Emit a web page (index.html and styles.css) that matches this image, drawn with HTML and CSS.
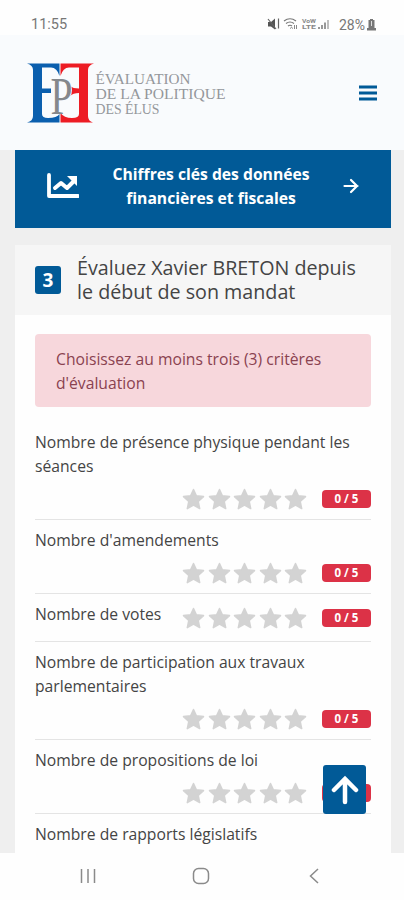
FILE: index.html
```html
<!DOCTYPE html>
<html lang="fr">
<head>
  <meta charset="UTF-8" />
  <meta name="viewport" content="width=device-width, initial-scale=1.0"/>
  <title>Évaluation de la politique des élus</title>
  <link rel="stylesheet" href="styles.css">
</head>
<body>
  <svg width="0" height="0" class="sprite">
    <symbol id="star" viewBox="0 0 24 24">
      <path d="M11.500 2.500l2.900 6.300 7.100.8-5.300 4.900 1.500 7.100-6.200-3.500-6.200 3.500 1.500-7.100L1.500 9.600l7.100-.8z" fill="#d3d3d3" stroke="#d3d3d3" stroke-width="1.500" stroke-linejoin="round"/>
    </symbol>
  </svg>
  <div class="phone">
    <div class="status">
      <span class="time">11:55</span>
      <div class="status-right">
        <svg class="status-icons" viewBox="0 0 66 14">
          <path d="M1 5h3l4-3.500v11L4 9.500H1z" fill="#555"/>
          <path d="M1 2l8 10M11.500 1.500v10" stroke="#666" stroke-width="1.200" fill="none"/>
          <path d="M17 4q6-4.500 12 0M19 6.500q4-3 8 0M21 9q2-1.500 4 0" stroke="#777" stroke-width="1.200" fill="none"/>
          <path d="M23 11.500l1.500-1 1.500 1M27.500 8v4M29.500 8v4" stroke="#888" fill="none"/>
          <text x="35" y="6" class="tiny" textLength="14" lengthAdjust="spacingAndGlyphs">VoW</text>
          <text x="35" y="12" class="tiny" textLength="14" lengthAdjust="spacingAndGlyphs">LTE</text>
          <path d="M52 12v-2M55 12V8M58 12V5.500" stroke="#777" stroke-width="1.500"/>
          <path d="M61 12V3" stroke="#aaa" stroke-width="1.500"/>
        </svg>
        <span class="percent">28%</span>
        <svg class="battery" viewBox="0 0 9 13">
          <path d="M3 1h3v1h1.500v8H9v2.500H0V10h1.500V2H3z" fill="#777"/>
          <path d="M4.500 3v5" stroke="#ddd" stroke-width="1"/>
        </svg>
      </div>
    </div>

    <header class="header">
      <svg class="logo" viewBox="0 0 204 66">
        <path d="M1 3.500H33.500V16Q31 7.500 25 7.500H16V28.500H25V33H16V54Q16 58 22 58Q31 58 33.500 54V62.500H1Q7 61 7 56V10Q7 5 1 3.500z" fill="#0b5fae"/>
        <path d="M68 3.500H34.500V16Q37 7.500 43 7.500H53V28.500Q47 28.500 44 26V36Q47 33 53 33V54Q53 58 46 58Q38 58 34.500 53V62.500H67Q62 61 62 56V10Q62 5 68 3.500z" fill="#ed1c24"/>
        <path d="M27 19h11q8 2 8 11t-8 10l-4 1v13h-8z" fill="#f9fbfd"/>
        <text x="24.500" y="54" class="logo-p" textLength="22" lengthAdjust="spacingAndGlyphs">P</text>
        <text x="69.500" y="23.500" class="logo-text" textLength="95" lengthAdjust="spacingAndGlyphs">ÉVALUATION</text>
        <text x="69.500" y="38.500" class="logo-text" textLength="130" lengthAdjust="spacingAndGlyphs">DE LA POLITIQUE</text>
        <text x="69.500" y="53.500" class="logo-text" textLength="64" lengthAdjust="spacingAndGlyphs">DES ÉLUS</text>
      </svg>
      <svg class="menu" viewBox="0 0 18 16">
        <path d="M0 2h18M0 8h18M0 14h18" stroke="#015a97" stroke-width="2.800"/>
      </svg>
    </header>

    <main class="content">
      <a href="#" class="banner">
        <svg class="chart" viewBox="0 0 32 26">
          <path d="M2 2v21h29" fill="none" stroke="#fff" stroke-width="3.800" stroke-linecap="round" stroke-linejoin="round"/>
          <path d="M8 15l6-5 6 5 7-7" fill="none" stroke="#fff" stroke-width="4" stroke-linecap="round" stroke-linejoin="round"/>
          <path d="M20 3h10v10z" fill="#fff"/>
        </svg>
        <span class="banner-text">Chiffres clés des données<br>financières et fiscales</span>
        <svg class="arrow" viewBox="0 0 16 16">
          <path d="M1.500 8h13M8 2l6 6-6 6" fill="none" stroke="#fff" stroke-width="2.200" stroke-linecap="round"/>
        </svg>
      </a>

      <section class="card">
        <div class="card-header">
          <span class="step">3</span>
          <h2>Évaluez Xavier BRETON depuis<br>le début de son mandat</h2>
        </div>
        <div class="card-body">
          <div class="alert">Choisissez au moins trois (3) critères<br>d'évaluation</div>
          <div class="row">
            <div class="label">Nombre de présence physique pendant les<br>séances</div>
            <div class="rating">
              <div class="stars"><svg><use href="#star"/></svg><svg><use href="#star"/></svg><svg><use href="#star"/></svg><svg><use href="#star"/></svg><svg><use href="#star"/></svg></div>
              <span class="badge">0 / 5</span>
            </div>
          </div>
          <div class="row">
            <div class="label">Nombre d'amendements</div>
            <div class="rating">
              <div class="stars"><svg><use href="#star"/></svg><svg><use href="#star"/></svg><svg><use href="#star"/></svg><svg><use href="#star"/></svg><svg><use href="#star"/></svg></div>
              <span class="badge">0 / 5</span>
            </div>
          </div>
          <div class="row row-inline">
            <div class="label">Nombre de votes</div>
            <div class="rating">
              <div class="stars"><svg><use href="#star"/></svg><svg><use href="#star"/></svg><svg><use href="#star"/></svg><svg><use href="#star"/></svg><svg><use href="#star"/></svg></div>
              <span class="badge">0 / 5</span>
            </div>
          </div>
          <div class="row">
            <div class="label">Nombre de participation aux travaux<br>parlementaires</div>
            <div class="rating">
              <div class="stars"><svg><use href="#star"/></svg><svg><use href="#star"/></svg><svg><use href="#star"/></svg><svg><use href="#star"/></svg><svg><use href="#star"/></svg></div>
              <span class="badge">0 / 5</span>
            </div>
          </div>
          <div class="row">
            <div class="label">Nombre de propositions de loi</div>
            <div class="rating">
              <div class="stars"><svg><use href="#star"/></svg><svg><use href="#star"/></svg><svg><use href="#star"/></svg><svg><use href="#star"/></svg><svg><use href="#star"/></svg></div>
              <span class="badge"></span>
            </div>
          </div>
          <div class="row">
            <div class="label">Nombre de rapports législatifs</div>
          </div>
        </div>
      </section>
    </main>

    <a href="#" class="to-top">
      <svg viewBox="0 0 28 30">
        <path d="M14 27V4M3 15L14 4l11 11" fill="none" stroke="#fff" stroke-width="4.500" stroke-linecap="round"/>
      </svg>
    </a>

    <nav class="android-nav">
      <svg viewBox="0 0 18 18"><path d="M2.500 2v14M9 2v14M15.500 2v14" stroke="#8a8a8a" stroke-width="1.500"/></svg>
      <svg viewBox="0 0 18 18"><rect x="1.500" y="1.500" width="15" height="15" rx="5" fill="none" stroke="#8a8a8a" stroke-width="1.500"/></svg>
      <svg viewBox="0 0 18 18"><path d="M13 2L5.500 9l7.500 7" fill="none" stroke="#8a8a8a" stroke-width="1.500"/></svg>
    </nav>
  </div>
</body>
</html>
```
FILE: styles.css
```css
* {
  box-sizing: border-box;
}
body {
  margin: 0;
  background-color: #fefefe;
  color: #444;
  font-family: 'Open Sans', sans-serif;
  font-size: 15.7px;
  line-height: 24px;
}
a {
  text-decoration: none;
}
svg {
  display: block;
  flex: none;
}
.sprite {
  position: absolute;
}
.phone {
  position: relative;
  display: flex;
  flex-direction: column;
  width: 404px;
  height: 900px;
  overflow: hidden;
}

/* status bar */
.status {
  display: flex;
  justify-content: space-between;
  align-items: center;
  height: 35px;
  padding: 13px 28px 0 31px;
  font-family: Roboto, sans-serif;
  font-size: 14.5px;
  color: #777;
}
.time {
  padding-top: 2px;
}
.status-right {
  display: flex;
  align-items: center;
}
.percent {
  padding-top: 2px;
  font-size: 14px;
}
.status-icons {
  width: 66px;
  height: 14px;
  margin-right: 6px;
}
.battery {
  width: 9px;
  height: 13px;
  margin-left: 2px;
}
.tiny {
  font-size: 5px;
  font-weight: bold;
  fill: #888;
}

/* header */
.header {
  display: flex;
  justify-content: space-between;
  align-items: center;
  height: 115px;
  padding: 0 27px 0 26px;
  background-color: #f9fbfd;
}
.logo {
  width: 204px;
  height: 66px;
}
.logo-text {
  font-family: 'Liberation Serif', serif;
  font-size: 15px;
  fill: #94979b;
}
.logo-p {
  font-family: 'Liberation Serif', serif;
  font-size: 53px;
  fill: #85888c;
}
.menu {
  width: 18px;
  height: 16px;
}

.content {
  flex: 1;
  min-height: 0;
  overflow: hidden;
  padding: 0 13px 0 15px;
  background-color: #efefef;
}
.banner {
  display: flex;
  align-items: center;
  justify-content: space-between;
  height: 78px;
  padding: 0 32px 7px;
  background-color: #015a97;
  color: white;
  font-weight: bold;
  text-align: center;
}
.chart {
  width: 32px;
  height: 26px;
}
.arrow {
  width: 16px;
  height: 16px;
}

.card {
  margin-top: 17px;
  background-color: #fefefe;
}
.card-header {
  display: flex;
  align-items: center;
  gap: 16px;
  height: 70px;
  padding-left: 20px;
  background-color: #f6f6f6;
}
.card-header h2 {
  margin: 0;
  font-size: 19.7px;
  font-weight: normal;
  line-height: 24px;
}
.step {
  width: 26px;
  height: 28px;
  border-radius: 3px;
  background-color: #015a97;
  color: white;
  font-size: 19px;
  font-weight: bold;
  line-height: 28px;
  text-align: center;
}
.card-body {
  padding: 19px 20px 20px;
}
.alert {
  height: 73px;
  margin-bottom: 15px;
  padding: 13px 21px;
  border-radius: 4px;
  background-color: #f7d7dc;
  color: #8a4250;
}

/* criteria */
.row {
  padding: 8px 0 4px;
  border-bottom: 1px solid #e4e4e4;
}
.row:last-child {
  border-bottom: none;
}
.rating {
  display: flex;
  align-items: center;
  justify-content: flex-end;
  gap: 14px;
  height: 32px;
  margin-top: 5px;
}
.stars {
  display: flex;
  gap: 1.5px;
}
.stars svg {
  width: 24px;
  height: 24px;
}
.badge {
  width: 49px;
  height: 18px;
  border-radius: 4px;
  background-color: #dc3247;
  color: white;
  font-size: 11.5px;
  font-weight: bold;
  line-height: 18px;
  text-align: center;
}
.row-inline {
  display: flex;
  justify-content: space-between;
  padding-bottom: 7px;
}
.row-inline .rating {
  margin-top: 0;
}

.to-top {
  position: absolute;
  left: 323px;
  top: 765px;
  display: flex;
  align-items: center;
  justify-content: center;
  width: 43px;
  height: 49px;
  border-radius: 3px;
  background-color: #015a97;
}
.to-top svg {
  width: 28px;
  height: 30px;
}

.android-nav {
  display: flex;
  justify-content: space-between;
  align-items: center;
  height: 47px;
  padding: 0 81px 1px 79px;
}
.android-nav svg {
  width: 18px;
  height: 18px;
}
```
